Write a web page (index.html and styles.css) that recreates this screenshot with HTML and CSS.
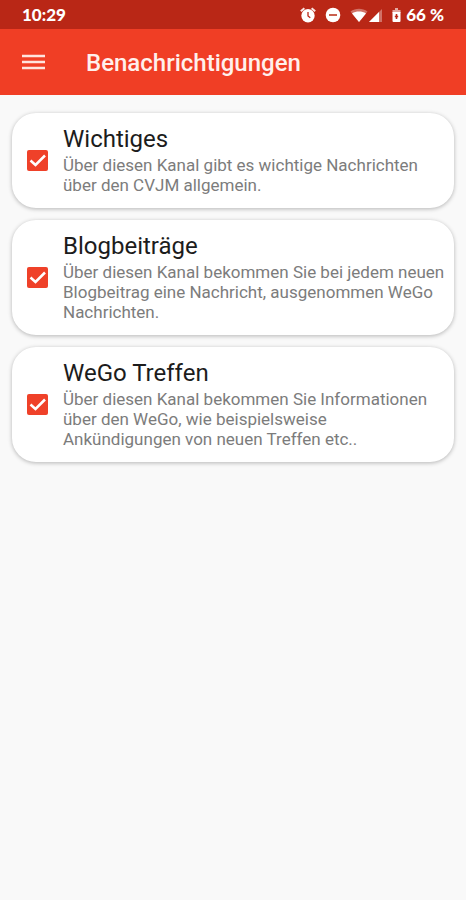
FILE: index.html
```html
<!DOCTYPE html>
<html lang="de">
<head>
<meta charset="utf-8">
<meta name="viewport" content="width=device-width, initial-scale=1">
<title>Benachrichtigungen</title>
<link rel="stylesheet" href="styles.css">
</head>
<body>
<div class="status">
  <span class="clock">10:29</span>
  <div class="indicators">
    <svg class="icon" width="16" height="16" viewBox="0 0 16 16" aria-hidden="true">
      <path d="M.8 4.200 4.400 1.200M15.200 4.200 11.600 1.200" stroke="#f9e4e1" stroke-width="2" fill="none"/>
      <circle cx="8" cy="8.800" r="6.700" fill="#fff"/>
      <path d="M8 5v4l2.300 1.700" stroke="#b92716" stroke-width="1.300" fill="none"/>
    </svg>
    <svg class="icon" width="16" height="16" viewBox="0 0 16 16" aria-hidden="true">
      <circle cx="8" cy="8" r="7.300" fill="#fff"/>
      <path d="M4 8h8" stroke="#c9604f" stroke-width="2"/>
    </svg>
    <div class="network">
      <svg class="icon" width="18" height="16" viewBox="0 0 18 16" aria-hidden="true">
        <path d="M.5 4.500C5.500.8 12.500.8 17.500 4.500L9 15z" fill="#fff" opacity=".35"/>
        <path d="M2 6.400C6 3.900 12 3.900 16 6.400L9 15z" fill="#fff"/>
      </svg>
      <svg class="icon" width="15" height="16" viewBox="0 0 15 16" aria-hidden="true">
        <path d="M1 15 14 2v13z" fill="#fff" opacity=".35"/>
        <path d="M1 15 11 5v10z" fill="#fff"/>
      </svg>
    </div>
    <div class="battery">
      <svg class="icon" width="9" height="16" viewBox="0 0 9 16" aria-hidden="true">
        <path d="M3 1h3v2h2.500v3h-8V3H3z" fill="#fff" opacity=".6"/>
        <path d="M.5 5h8v9a1 1 0 0 1-1 1h-6a1 1 0 0 1-1-1z" fill="#fff"/>
        <path d="M4.500 7v5M2.800 9.500h3.400" stroke="#b92716" stroke-width="1.600"/>
      </svg>
      <span>66 %</span>
    </div>
  </div>
</div>
<header class="appbar">
  <button class="menu" type="button" aria-label="Menü">
    <svg class="icon" width="24" height="16" viewBox="0 0 24 16" aria-hidden="true">
      <path d="M0 2h23M0 8h23M0 14h23" stroke="#ffe4de" stroke-width="2.600"/>
    </svg>
  </button>
  <h1>Benachrichtigungen</h1>
</header>
<main class="channels">
  <label class="card">
    <input type="checkbox" checked>
    <span class="text">
      <span class="title">Wichtiges</span>
      <span class="description">Über diesen Kanal gibt es wichtige Nachrichten über den CVJM allgemein.</span>
    </span>
  </label>
  <label class="card">
    <input type="checkbox" checked>
    <span class="text">
      <span class="title">Blogbeiträge</span>
      <span class="description">Über diesen Kanal bekommen Sie bei jedem neuen Blogbeitrag eine Nachricht, ausgenommen WeGo Nachrichten.</span>
    </span>
  </label>
  <label class="card">
    <input type="checkbox" checked>
    <span class="text">
      <span class="title">WeGo Treffen</span>
      <span class="description">Über diesen Kanal bekommen Sie Informationen über den WeGo, wie beispielsweise Ankündigungen von neuen Treffen etc..</span>
    </span>
  </label>
</main>
</body>
</html>
```
FILE: styles.css
```css
* {
  box-sizing: border-box;
}

body {
  margin: 0;
  min-height: 100vh;
  background: #f9f9f9;
  font-family: Roboto, "Liberation Sans", sans-serif;
}

.icon {
  display: block;
}

.status {
  display: flex;
  align-items: center;
  justify-content: space-between;
  height: 29px;
  padding: 0 22px;
  background: #b92716;
  color: #fff;
  font-family: Lato, sans-serif;
  font-size: 17px;
  font-weight: 900;
}

.indicators {
  display: flex;
  align-items: center;
  gap: 9px;
}

.network,
.battery {
  display: flex;
  align-items: center;
}

.battery {
  gap: 5px;
}

.appbar {
  display: flex;
  align-items: center;
  gap: 40px;
  height: 66px;
  padding: 0 22px;
  background: #f03e25;
}

.menu {
  padding: 0;
  border: 0;
  background: none;
}

h1 {
  margin: 0;
  padding-top: 2px;
  color: #fff0ec;
  font-size: 24px;
  font-weight: 500;
}

.channels {
  display: flex;
  flex-direction: column;
  gap: 12px;
  padding: 18px 12px;
}

.card {
  display: flex;
  align-items: center;
  gap: 15px;
  padding: 12px 8px 13px 15px;
  border-radius: 24px;
  background: #fff;
  box-shadow: 0 1px 4px rgba(0, 0, 0, 0.28);
}

.card input {
  appearance: none;
  flex: none;
  width: 21px;
  height: 21px;
  margin: 0;
  border-radius: 2px;
  background: #ef4129 url("data:image/svg+xml,%3Csvg xmlns='http://www.w3.org/2000/svg' viewBox='0 0 21 21'%3E%3Cpath d='M3.500 10.500l5 4.500 9.500-9.500' fill='none' stroke='%23fff' stroke-width='2.500'/%3E%3C/svg%3E");
}

.text {
  display: flex;
  flex-direction: column;
  gap: 2px;
}

.title {
  color: #1c1c1c;
  font-size: 24px;
  line-height: 28px;
}

.description {
  color: #7c7c7c;
  font-size: 17px;
  line-height: 20px;
}
```
